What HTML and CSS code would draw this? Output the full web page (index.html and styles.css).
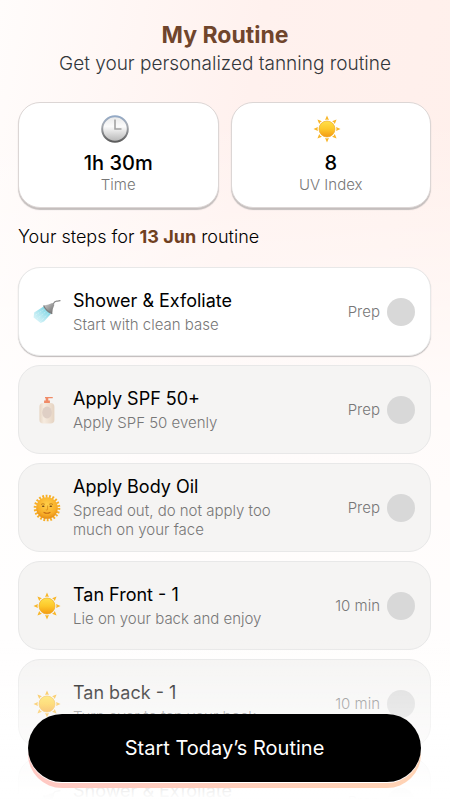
FILE: index.html
```html
<!DOCTYPE html>
<html lang="en">
<head>
<meta charset="UTF-8" />
<meta name="viewport" content="width=device-width, initial-scale=1.0">
<title>My Routine</title>
<link rel="stylesheet" href="styles.css">
</head>
<body>

<!-- Shared icons -->
<svg class="sprite" width="0" height="0" aria-hidden="true">
  <defs>
    <linearGradient id="sunFill" x1="0" y1="0" x2="0" y2="1">
      <stop offset="0" stop-color="#ffe04a" />
      <stop offset="0.5" stop-color="#fdc82a" />
      <stop offset="1" stop-color="#f49a12" />
    </linearGradient>
    <radialGradient id="faceFill" cx="0.5" cy="0.35" r="0.65">
      <stop offset="0" stop-color="#ffd04a" />
      <stop offset="0.7" stop-color="#f8ae28" />
      <stop offset="1" stop-color="#e58c14" />
    </radialGradient>
    <linearGradient id="clockRim" x1="0" y1="0" x2="0" y2="1">
      <stop offset="0" stop-color="#93a9c6" />
      <stop offset="0.35" stop-color="#a9adb3" />
      <stop offset="1" stop-color="#5c5c5c" />
    </linearGradient>
    <linearGradient id="clockFace" x1="0" y1="0" x2="0" y2="1">
      <stop offset="0" stop-color="#e8e8e8" />
      <stop offset="0.4" stop-color="#fbfbfb" />
      <stop offset="1" stop-color="#b4b4b4" />
    </linearGradient>
    <linearGradient id="waterFill" x1="1" y1="0" x2="0" y2="1">
      <stop offset="0" stop-color="#5cc9dc" />
      <stop offset="1" stop-color="#a5e6f0" stop-opacity="0.3" />
    </linearGradient>
    <linearGradient id="metalFill" x1="0" y1="0" x2="1" y2="1">
      <stop offset="0" stop-color="#d2d2d2" />
      <stop offset="1" stop-color="#666" />
    </linearGradient>
    <linearGradient id="bottleFill" x1="0" y1="0" x2="1" y2="0">
      <stop offset="0" stop-color="#e6d5c4" />
      <stop offset="0.3" stop-color="#f6ebdf" />
      <stop offset="1" stop-color="#e5d3c2" />
    </linearGradient>

    <symbol id="sun" viewBox="0 0 28 28">
      <g fill="#f8b526">
        <path id="ray" d="M14 .5 L15.9 4.9 Q14 4 12.1 4.9 Z" />
        <use href="#ray" transform="rotate(45 14 14)" />
        <use href="#ray" transform="rotate(90 14 14)" />
        <use href="#ray" transform="rotate(135 14 14)" />
        <use href="#ray" transform="rotate(180 14 14)" />
        <use href="#ray" transform="rotate(225 14 14)" />
        <use href="#ray" transform="rotate(270 14 14)" />
        <use href="#ray" transform="rotate(315 14 14)" />
      </g>
      <circle cx="14" cy="14" r="8" fill="url(#sunFill)" stroke="#eda61c" stroke-width=".6" />
    </symbol>

    <symbol id="sunFace" viewBox="0 0 28 28">
      <circle cx="14" cy="14" r="11.8" fill="none" stroke="#f7ae25" stroke-width="3" stroke-dasharray="1.8 1.57" />
      <circle cx="14" cy="14" r="10.8" fill="url(#faceFill)" />
      <path d="M8 10.5q1.8-1.5 3.8-.2M16.2 10.3q2-1.3 3.800.2" fill="none" stroke="#b9700f" stroke-width=".8" />
      <ellipse cx="10.2" cy="12.3" rx="1.3" ry=".8" fill="#6b431a" />
      <ellipse cx="17.8" cy="12.3" rx="1.3" ry=".8" fill="#6b431a" />
      <path d="M14.6 11.5v4.2q-.8.7-1.8 0" fill="none" stroke="#d98a1b" stroke-width=".8" />
      <path d="M11 18.4q3 1.7 6 0" fill="none" stroke="#c26a14" stroke-width="1.1" stroke-linecap="round" />
    </symbol>

    <symbol id="clock" viewBox="0 0 28 28">
      <circle cx="14" cy="14" r="12.8" fill="url(#clockFace)" stroke="url(#clockRim)" stroke-width="2" />
      <path d="M14 4.5V14h6.5" fill="none" stroke="#a3a3a3" stroke-width="1.6" />
    </symbol>

    <symbol id="shower" viewBox="0 0 28 28">
      <path d="M10.5 8.5L1.2 14.5 .6 19.4 7.6 25 11 23.6 18 15.8Z" fill="url(#waterFill)" />
      <path d="M11.5 11L2 17.5M13.5 13L4.5 20.5M15.5 15L7.5 23.5" stroke="#fff" stroke-width=".8" stroke-dasharray="1.2 1" opacity=".5" />
      <path d="M10.6 7.6q5.4-1 8.6-2.7l2.2 1.8q-2 3.6-2.2 9.1-6-2.6-8.6-8.2Z" fill="url(#metalFill)" />
      <path d="M10.6 7.6q2.2 5.4 8.6 8.2" fill="none" stroke="#7b7b7b" stroke-width="1.2" />
      <path d="M20.3 5.7q1.5-2.7 3.5-2.6 1.6.2 3.2-.4" fill="none" stroke="#8c8c8c" stroke-width="1.3" stroke-linecap="round" />
    </symbol>

    <symbol id="lotion" viewBox="0 0 28 28">
      <path d="M12 1h7.4q1 .2.3 1.2h-4.4v2.3h1.6v2.6h-5.800V4.5h1.6V2.2H12Z" fill="#f08b67" />
      <rect x="6.4" y="7" width="15" height="20.5" rx="3.8" fill="url(#bottleFill)" />
      <ellipse cx="14" cy="16.6" rx="4.8" ry="6" fill="#dfcfc5" />
    </symbol>
  </defs>
</svg>

<header>
  <h1>My Routine</h1>
  <p>Get your personalized tanning routine</p>
</header>

<main>
  <section class="stats">
    <div class="stat">
      <svg class="icon"><use href="#clock" /></svg>
      <strong>1h 30m</strong>
      <span>Time</span>
    </div>
    <div class="stat">
      <svg class="icon"><use href="#sun" /></svg>
      <strong>8</strong>
      <span>UV Index</span>
    </div>
  </section>

  <h2>Your steps for <b>13 Jun</b> routine</h2>

  <ul class="steps">
    <li class="step active">
      <svg class="icon"><use href="#shower" /></svg>
      <label class="info" for="step1">
        <span class="name">Shower &amp; Exfoliate</span>
        <span class="note">Start with clean base</span>
      </label>
      <span class="tag">Prep</span>
      <input type="checkbox" id="step1">
    </li>
    <li class="step">
      <svg class="icon"><use href="#lotion" /></svg>
      <label class="info" for="step2">
        <span class="name">Apply SPF 50+</span>
        <span class="note">Apply SPF 50 evenly</span>
      </label>
      <span class="tag">Prep</span>
      <input type="checkbox" id="step2">
    </li>
    <li class="step">
      <svg class="icon"><use href="#sunFace" /></svg>
      <label class="info" for="step3">
        <span class="name">Apply Body Oil</span>
        <span class="note">Spread out, do not apply too much on your face</span>
      </label>
      <span class="tag">Prep</span>
      <input type="checkbox" id="step3">
    </li>
    <li class="step">
      <svg class="icon"><use href="#sun" /></svg>
      <label class="info" for="step4">
        <span class="name">Tan Front - 1</span>
        <span class="note">Lie on your back and enjoy</span>
      </label>
      <span class="tag">10 min</span>
      <input type="checkbox" id="step4">
    </li>
    <li class="step">
      <svg class="icon"><use href="#sun" /></svg>
      <label class="info" for="step5">
        <span class="name">Tan back - 1</span>
        <span class="note">Turn over to tan your back</span>
      </label>
      <span class="tag">10 min</span>
      <input type="checkbox" id="step5">
    </li>
    <li class="step">
      <svg class="icon"><use href="#shower" /></svg>
      <label class="info" for="step6">
        <span class="name">Shower &amp; Exfoliate</span>
        <span class="note">Start with clean base</span>
      </label>
      <span class="tag">Prep</span>
      <input type="checkbox" id="step6">
    </li>
  </ul>
</main>

<!-- Start button stays over the list -->
<footer class="bottom-bar">
  <button type="button" class="start">Start Today’s Routine</button>
</footer>

</body>
</html>
```

FILE: styles.css
```css
/* Base styles */
* {
  box-sizing: border-box;
}

body {
  font-family: 'Inter', 'Lato', sans-serif;
  font-weight: 300;
  margin: 0;
  height: 100vh;
  display: flex;
  flex-direction: column;
  overflow: hidden;
  color: #000;
  background:
    linear-gradient(to bottom, rgba(255,255,255,0) 15%, rgba(255,255,255,0.75) 50%, #fff 98%),
    linear-gradient(100deg, #fffcfb 0%, #fff1ee 45%, #ffefea 100%);
}

.sprite {
  position: absolute;
}

header {
  text-align: center;
  padding: 20px 18px 26px;
}

h1 {
  margin: 0 0 2px;
  font-size: 23px;
  line-height: 30px;
  font-weight: 700;
  color: #70452c;
}

header p {
  margin: 0;
  font-size: 19px;
  line-height: 24px;
  color: #33373b;
}

main {
  flex: 1;
  min-height: 0;
  padding: 0 19px 0 18px;
}

.icon {
  width: 28px;
  height: 28px;
  flex: none;
}

/* Time and UV cards */
.stats {
  display: grid;
  grid-template-columns: 1fr 1fr;
  gap: 12px;
}

.stat {
  display: flex;
  flex-direction: column;
  align-items: center;
  padding: 12px;
  background: #fff;
  border: 1px solid #dcd6d5;
  border-radius: 22px;
  box-shadow: 0 2px 1px #c4bebd;
}

.stat .icon {
  margin: 0 7px 8px 0;
}

.stat strong {
  font-size: 20px;
  line-height: 24px;
  font-weight: 500;
}

.stat span {
  font-size: 15px;
  line-height: 20px;
  color: #777;
}

h2 {
  margin: 17px 0 18px;
  font-size: 18px;
  line-height: 24px;
  font-weight: 300;
}

h2 b {
  font-weight: 700;
  color: #70401f;
}

/* Steps list */
.steps {
  list-style: none;
  margin: 0;
  padding: 0;
  display: flex;
  flex-direction: column;
  gap: 9px;
}

.step {
  display: flex;
  align-items: center;
  min-height: 89px;
  padding: 8px 15px 8px 14px;
  background: #f5f4f3;
  border: 1px solid #e8e8e8;
  border-radius: 22px;
}

.step.active {
  background: #fff;
  box-shadow: 0 1px 1px #bfbaba;
}

.info {
  flex: 1;
  max-width: 230px;
  margin: 0 auto 0 12px;
  padding-bottom: 3px;
}

.name,
.note {
  display: block;
}

.name {
  font-size: 18px;
  line-height: 28px;
  font-weight: 400;
}

.note {
  font-size: 15px;
  line-height: 19px;
  color: #777;
}

.tag {
  margin-right: 7px;
  font-size: 15px;
  color: #777;
}

.step input {
  appearance: none;
  flex: none;
  width: 28px;
  height: 28px;
  margin: 0;
  border-radius: 50%;
  background: #d8d8d8;
  cursor: pointer;
}

.step input:checked {
  background: #70452c;
}

/* Bottom button with fade */
.bottom-bar {
  position: fixed;
  left: 0;
  right: 0;
  bottom: 0;
  padding: 74px 29px 18px 28px;
  background: linear-gradient(to bottom, rgba(255,255,255,0), #fff 100%);
}

.start {
  display: block;
  width: 100%;
  height: 68px;
  border: none;
  border-radius: 34px;
  background: #000;
  box-shadow: 0 1px 0 #fff;
  color: #fff;
  font-family: inherit;
  font-size: 20px;
  font-weight: 400;
  cursor: pointer;
  position: relative;
}

/* Peach edge under the button */
.start::after {
  content: '';
  position: absolute;
  inset: 6px 0 -6px;
  z-index: -1;
  border-radius: 34px;
  background: linear-gradient(to right, #ffc9c4, #ffd3b4);
}
```
